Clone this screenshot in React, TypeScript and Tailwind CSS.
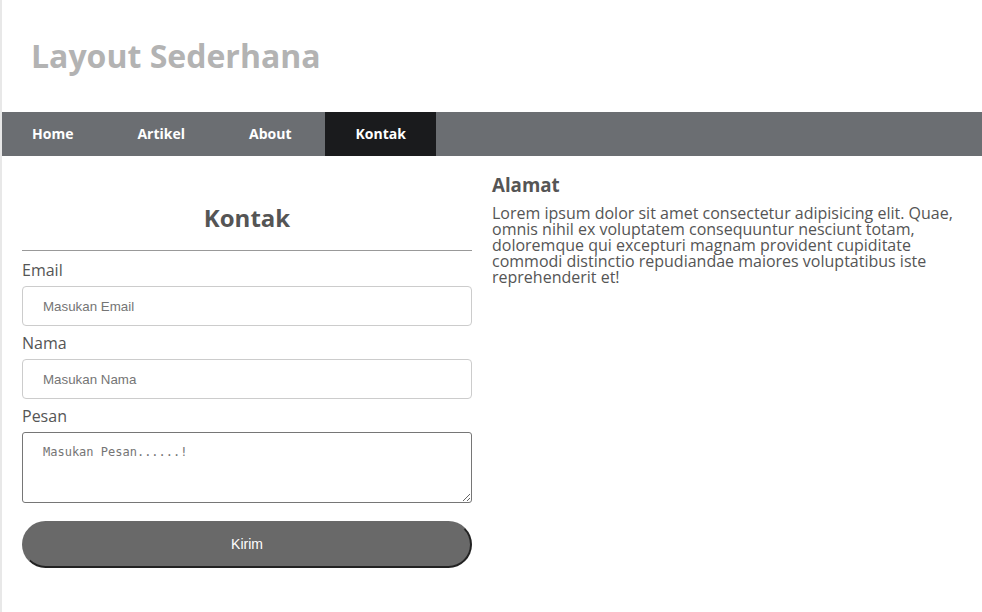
const menu = ['Home', 'Artikel', 'About', 'Kontak'];

function Field({ label, placeholder }: { label: string; placeholder: string }) {
  return (
    <div className="mt-[6px] first:mt-0">
      <label className="block text-[16px] leading-[22px] text-[#555]">{label}</label>
      <input
        type="text"
        placeholder={placeholder}
        className="mt-[5px] block w-full h-[40px] rounded-[4px] border border-[#ccc] bg-white px-[20px] text-[13.33px] text-[#333] placeholder:text-[#757575] outline-none"
        style={{ fontFamily: '"Liberation Sans", Arial, sans-serif' }}
      />
    </div>
  );
}

export default function App() {
  return (
    <div className="min-h-screen flex bg-white" style={{ fontFamily: '"Open Sans", sans-serif' }}>
      <div className="w-[2px] shrink-0 bg-[#e8e8e8]" />
      <div className="flex-1 flex flex-col">
        {/* Header */}
        <header className="h-[112px] pt-[34px] pl-[29px]">
          <h1 className="text-[32px] leading-[44px] font-bold text-[#b3b3b3]">Layout Sederhana</h1>
        </header>

        {/* Nav */}
        <nav className="h-[44px] flex gap-[4px] bg-[#6b6e72]">
          {menu.map((m) => (
            <a
              key={m}
              href="#"
              className={`flex items-center px-[30px] pb-[1px] text-[14px] font-bold text-white ${m === 'Kontak' ? 'bg-[#1a1b1d]' : ''}`}
            >
              {m}
            </a>
          ))}
        </nav>

        <main className="flex gap-[20px] px-[20px]">
          {/* Form */}
          <section className="w-[450px] shrink-0">
            <h2 className="mt-[45px] text-center text-[24px] leading-[33px] font-bold text-[#555]">Kontak</h2>
            <hr className="mt-[16px] border-t border-[#999]" />
            <form className="mt-[8px]" onSubmit={(e) => e.preventDefault()}>
              <Field label="Email" placeholder="Masukan Email" />
              <Field label="Nama" placeholder="Masukan Nama" />
              <div className="mt-[6px]">
                <label className="block text-[16px] leading-[22px] text-[#555]">Pesan</label>
                <textarea
                  placeholder="Masukan Pesan......!"
                  className="mt-[5px] block w-full h-[71px] rounded-[3px] border border-[#767676] bg-white px-[20px] pt-[12px] text-[12px] leading-[15px] placeholder:text-[#757575] outline-none"
                  style={{ fontFamily: '"DejaVu Sans Mono", monospace' }}
                />
              </div>
              <button
                type="submit"
                className="mt-[18px] w-full h-[47px] rounded-full bg-[#696969] border-2 border-t-[#696969] border-l-[#696969] border-b-[#222] border-r-[#222] text-[14px] text-white"
                style={{ fontFamily: '"Liberation Sans", Arial, sans-serif' }}
              >
                Kirim
              </button>
            </form>
          </section>

          {/* Alamat */}
          <section className="flex-1 text-[#555]">
            <h3 className="mt-[16px] text-[18.72px] leading-[25px] font-bold">Alamat</h3>
            <p className="mt-[8px] text-[16px] leading-[16px]">
              Lorem ipsum dolor sit amet consectetur adipisicing elit. Quae, omnis nihil ex voluptatem consequuntur
              nesciunt totam, doloremque qui excepturi magnam provident cupiditate commodi distinctio repudiandae
              maiores voluptatibus iste reprehenderit et!
            </p>
          </section>
        </main>
      </div>
    </div>
  );
}
